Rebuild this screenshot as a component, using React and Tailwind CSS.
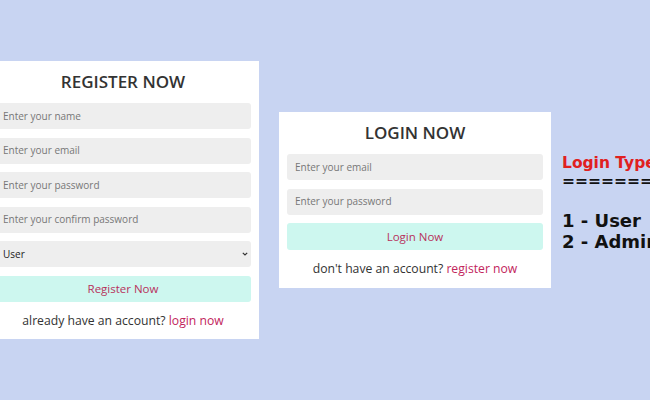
export default function App() {
  const font = { fontFamily: '"Open Sans", "Noto Sans", sans-serif' };
  return (
    <div className="h-[400px] w-[650px] overflow-hidden bg-[#c8d4f2] flex items-center" style={font}>
      <div className="ml-[-13px] w-[272px] shrink-0 bg-white px-2 pt-2 pb-[9px]">
        <h2 className="text-[17px] leading-[26px] font-semibold text-center text-[#333] mb-2">REGISTER NOW</h2>
        <div className="flex flex-col gap-[8.5px]">
          <div className="h-[26px] rounded-[3px] bg-[#eee] px-2 flex items-center text-[10px] text-[#777]">Enter your name</div>
          <div className="h-[26px] rounded-[3px] bg-[#eee] px-2 flex items-center text-[10px] text-[#777]">Enter your email</div>
          <div className="h-[26px] rounded-[3px] bg-[#eee] px-2 flex items-center text-[10px] text-[#777]">Enter your password</div>
          <div className="h-[26px] rounded-[3px] bg-[#eee] px-2 flex items-center text-[10px] text-[#777]">Enter your confirm password</div>
          <div className="h-[26px] rounded-[3px] bg-[#eee] pl-2 pr-[3px] flex items-center justify-between text-[10px] text-[#222]">
            <span>User</span>
            <svg width="6" height="4" viewBox="0 0 6 4"><path d="M0.8 0.8l2.2 2.2L5.2 0.8" fill="none" stroke="#333" strokeWidth="1.2" /></svg>
          </div>
          <div className="h-[26px] rounded-[3px] bg-[#cdf7ef] flex items-center justify-center text-[11.5px] text-[#b8325c]">Register Now</div>
        </div>
        <p className="mt-[10px] leading-[18px] text-center text-[12.2px] text-[#333]">already have an account? <span className="text-[#c2255c]">login now</span></p>
      </div>
      <div className="ml-5 w-[272px] shrink-0 bg-white px-2 pt-2 pb-[10px]">
        <h2 className="text-[17px] leading-[26px] font-semibold text-center text-[#333] mb-2">LOGIN NOW</h2>
        <div className="flex flex-col gap-[8.5px]">
          <div className="h-[26px] rounded-[3px] bg-[#eee] px-2 flex items-center text-[10px] text-[#777]">Enter your email</div>
          <div className="h-[26px] rounded-[3px] bg-[#eee] px-2 flex items-center text-[10px] text-[#777]">Enter your password</div>
          <div className="h-[27px] rounded-[3px] bg-[#cdf7ef] flex items-center justify-center text-[11.5px] text-[#b8325c]">Login Now</div>
        </div>
        <p className="mt-[10px] leading-[18px] text-center text-[12.2px] text-[#333]">don't have an account? <span className="text-[#c2255c]">register now</span></p>
      </div>
      <div className="ml-[11px] mt-[6.5px] shrink-0 whitespace-pre font-bold text-[#111]" style={{ fontFamily: '"DejaVu Sans", Verdana, sans-serif' }}>
        <div className="h-[17px] text-[15.5px] leading-[17px] text-[#e0201f]">Login Type:</div>
        <div className="h-[19px] text-[15.5px] leading-[19px]">==========</div>
        <div className="h-[19.5px]">&nbsp;</div>
        <div className="h-[21px] text-[18px] leading-[21px]">1 - User</div>
        <div className="h-[21px] text-[18px] leading-[21px]">2 - Admin</div>
      </div>
    </div>
  );
}
